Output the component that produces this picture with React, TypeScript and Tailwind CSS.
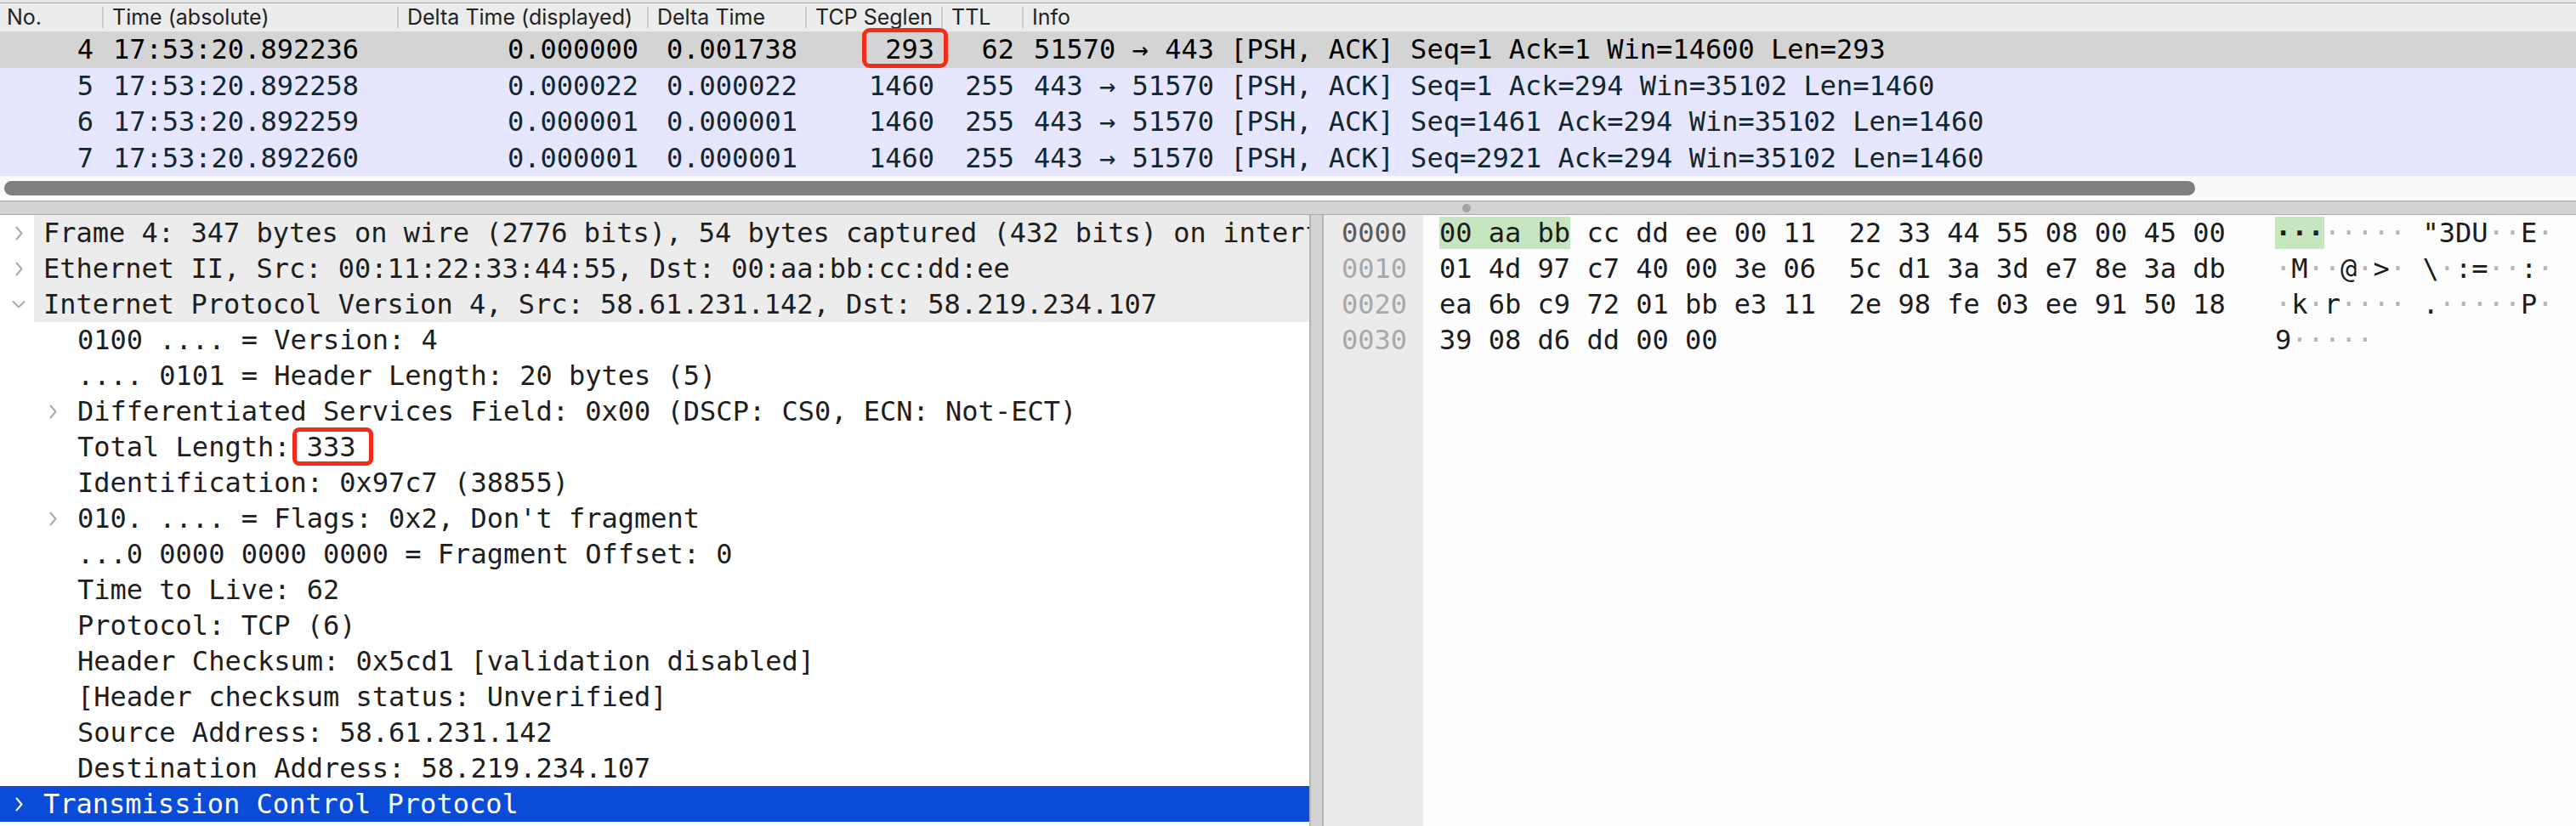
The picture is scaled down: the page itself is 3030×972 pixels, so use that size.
import React from "react";

const MONO = { fontFamily: '"DejaVu Sans Mono", "Liberation Mono", monospace' } as const;
const SANS = { fontFamily: 'Inter, "Liberation Sans", sans-serif' } as const;

function ChevRight({ color = "#a9a9a9" }: { color?: string }) {
  return (
    <svg width="11" height="17" viewBox="0 0 11 17" fill="none">
      <polyline points="2.5,1.5 8.5,8.5 2.5,15.5" stroke={color} strokeWidth="2" strokeLinecap="round" strokeLinejoin="round" />
    </svg>
  );
}

function ChevDown({ color = "#a9a9a9" }: { color?: string }) {
  return (
    <svg width="16" height="11" viewBox="0 0 16 11" fill="none">
      <polyline points="1.5,2 8,8.5 14.5,2" stroke={color} strokeWidth="2" strokeLinecap="round" strokeLinejoin="round" />
    </svg>
  );
}

type Pkt = { no: string; time: string; dd: string; d: string; seg: string; ttl: string; info: string; sel?: boolean };

const packets: Pkt[] = [
  { no: "4", time: "17:53:20.892236", dd: "0.000000", d: "0.001738", seg: "293", ttl: "62", info: "51570 → 443 [PSH, ACK] Seq=1 Ack=1 Win=14600 Len=293", sel: true },
  { no: "5", time: "17:53:20.892258", dd: "0.000022", d: "0.000022", seg: "1460", ttl: "255", info: "443 → 51570 [PSH, ACK] Seq=1 Ack=294 Win=35102 Len=1460" },
  { no: "6", time: "17:53:20.892259", dd: "0.000001", d: "0.000001", seg: "1460", ttl: "255", info: "443 → 51570 [PSH, ACK] Seq=1461 Ack=294 Win=35102 Len=1460" },
  { no: "7", time: "17:53:20.892260", dd: "0.000001", d: "0.000001", seg: "1460", ttl: "255", info: "443 → 51570 [PSH, ACK] Seq=2921 Ack=294 Win=35102 Len=1460" },
];

function HeaderCell({ label, w, first }: { label: string; w?: string; first?: boolean }) {
  return (
    <div className={`flex h-full shrink-0 ${w ?? "flex-1"}`}>
      {!first && <div className="my-[4px] w-[2px] bg-[#cbcbcb]" />}
      <div className={`flex items-center ${first ? "pl-[8px]" : "pl-[10px]"} text-[25px] text-[#222222]`} style={SANS}>
        {label}
      </div>
    </div>
  );
}

type Det = { level: 0 | 1; chev?: "r" | "d"; text: React.ReactNode; grey?: boolean; sel?: boolean };

const details: Det[] = [
  { level: 0, chev: "r", grey: true, text: "Frame 4: 347 bytes on wire (2776 bits), 54 bytes captured (432 bits) on interface en0, id 0" },
  { level: 0, chev: "r", grey: true, text: "Ethernet II, Src: 00:11:22:33:44:55, Dst: 00:aa:bb:cc:dd:ee" },
  { level: 0, chev: "d", grey: true, text: "Internet Protocol Version 4, Src: 58.61.231.142, Dst: 58.219.234.107" },
  { level: 1, text: "0100 .... = Version: 4" },
  { level: 1, text: ".... 0101 = Header Length: 20 bytes (5)" },
  { level: 1, chev: "r", text: "Differentiated Services Field: 0x00 (DSCP: CS0, ECN: Not-ECT)" },
  {
    level: 1,
    text: (
      <>
        Total Length:{" "}
        <span className="relative inline-block">
          333
          <span className="absolute -left-[17px] -right-[20px] -top-[2px] -bottom-[1px] rounded-[8px] border-[5px] border-[#f42b16]" />
        </span>
      </>
    ),
  },
  { level: 1, text: "Identification: 0x97c7 (38855)" },
  { level: 1, chev: "r", text: "010. .... = Flags: 0x2, Don't fragment" },
  { level: 1, text: "...0 0000 0000 0000 = Fragment Offset: 0" },
  { level: 1, text: "Time to Live: 62" },
  { level: 1, text: "Protocol: TCP (6)" },
  { level: 1, text: "Header Checksum: 0x5cd1 [validation disabled]" },
  { level: 1, text: "[Header checksum status: Unverified]" },
  { level: 1, text: "Source Address: 58.61.231.142" },
  { level: 1, text: "Destination Address: 58.219.234.107" },
  { level: 0, chev: "r", sel: true, text: "Transmission Control Protocol" },
];

const hexRows: { off: string; hl: string; hex: string; ascii: string; asciiHl: number }[] = [
  { off: "0000", hl: "00 aa bb", hex: " cc dd ee 00 11  22 33 44 55 08 00 45 00", ascii: "········ \"3DU··E·", asciiHl: 3 },
  { off: "0010", hl: "", hex: "01 4d 97 c7 40 00 3e 06  5c d1 3a 3d e7 8e 3a db", ascii: "·M··@·>· \\·:=··:·", asciiHl: 0 },
  { off: "0020", hl: "", hex: "ea 6b c9 72 01 bb e3 11  2e 98 fe 03 ee 91 50 18", ascii: "·k·r···· .·····P·", asciiHl: 0 },
  { off: "0030", hl: "", hex: "39 08 d6 dd 00 00", ascii: "9·····", asciiHl: 0 },
];

function Ascii({ s, hl }: { s: string; hl: number }) {
  const head = Array.from(s).slice(0, hl).join("");
  const rest = Array.from(s).slice(hl);
  return (
    <span className="whitespace-pre">
      {head && <span className="bg-[#c6e6bf] font-bold text-[#1c1c1c]">{head}</span>}
      {rest.map((c, i) => (
        <span key={i} className={c === "·" ? "text-[#b4b4b4]" : "text-[#1c1c1c]"}>
          {c}
        </span>
      ))}
    </span>
  );
}

export default function App() {
  return (
    <div className="flex h-[972px] w-[3030px] flex-col overflow-hidden bg-white">
      {/* top strip */}
      <div className="h-[4px] shrink-0 border-b border-[#ababab] bg-[#e4e4e4]" />
      {/* header */}
      <div className="flex h-[33px] shrink-0 bg-[#ececec]">
        <HeaderCell label="No." w="w-[120px]" first />
        <HeaderCell label="Time (absolute)" w="w-[347px]" />
        <HeaderCell label="Delta Time (displayed)" w="w-[294px]" />
        <HeaderCell label="Delta Time" w="w-[186px]" />
        <HeaderCell label="TCP Seglen" w="w-[160px]" />
        <HeaderCell label="TTL" w="w-[95px]" />
        <HeaderCell label="Info" />
      </div>
      {/* packet rows */}
      <div className="shrink-0 text-[32px]" style={MONO}>
        {packets.map((p) => (
          <div
            key={p.no}
            className={`flex h-[42.5px] items-center whitespace-pre leading-[42px] ${
              p.sel ? "bg-[#d4d4d4] text-black" : "bg-[#e7e6ff] text-[#12272e]"
            }`}
          >
            <div className="w-[120px] shrink-0 pr-[10px] text-right">{p.no}</div>
            <div className="w-[347px] shrink-0 pl-[13px]">{p.time}</div>
            <div className="w-[294px] shrink-0 pr-[10px] text-right">{p.dd}</div>
            <div className="w-[186px] shrink-0 pr-[9px] text-right">{p.d}</div>
            <div className="relative w-[160px] shrink-0 pr-[8px] text-right">
              {p.seg}
              {p.sel && (
                <span className="absolute -bottom-[1px] -right-[8px] -top-[4px] left-[67px] rounded-[9px] border-[5px] border-[#f42b16]" />
              )}
            </div>
            <div className="w-[95px] shrink-0 pr-[9px] text-right">{p.ttl}</div>
            <div className="flex-1 pl-[14px]">{p.info}</div>
          </div>
        ))}
      </div>
      {/* horizontal scrollbar */}
      <div className="h-[29px] shrink-0 bg-[#fafafa] pt-[6px]">
        <div className="ml-[5px] h-[17px] w-[2577px] rounded-full bg-[#7f7f7f]" />
      </div>
      {/* splitter */}
      <div className="flex h-[17px] shrink-0 items-center border-y border-[#a9a9a9] bg-[#d3d3d3]">
        <div className="ml-[1720px] h-[10px] w-[10px] rounded-full bg-[#a3a3a3]" />
      </div>
      {/* bottom panes */}
      <div className="flex min-h-0 flex-1 text-[32px]" style={MONO}>
        {/* detail tree */}
        <div className="w-[1540px] shrink-0 overflow-hidden bg-white">
          {details.map((d, i) => (
            <div
              key={i}
              className={`flex h-[42px] items-center whitespace-pre leading-[42px] ${
                d.sel ? "bg-[#0a4cd8] text-white" : "text-[#1e1e1e]"
              }`}
            >
              <div className="flex h-full w-[40px] shrink-0 items-center">
                {d.level === 0 && d.chev === "r" && (
                  <div className="ml-[17px] flex items-center">
                    <ChevRight color={d.sel ? "#ffffff" : "#a9a9a9"} />
                  </div>
                )}
                {d.level === 0 && d.chev === "d" && (
                  <div className="ml-[14px] flex items-center">
                    <ChevDown />
                  </div>
                )}
              </div>
              <div className={`flex h-full flex-1 items-center ${d.grey ? "bg-[#ececec]" : ""}`}>
                {d.level === 0 ? (
                  <div className="pl-[11px]">{d.text}</div>
                ) : (
                  <>
                    <div className="flex w-[51px] shrink-0 items-center pl-[17px]">
                      {d.chev === "r" && <ChevRight />}
                    </div>
                    <div>{d.text}</div>
                  </>
                )}
              </div>
            </div>
          ))}
        </div>
        {/* vertical splitter */}
        <div className="w-[17px] shrink-0 border-x-2 border-[#b4b4b4] bg-[#d3d3d3]" />
        {/* offsets */}
        <div className="w-[117px] shrink-0 bg-[#ebebeb]">
          {hexRows.map((r, i) => (
            <div key={r.off} className={`h-[42px] pl-[21px] leading-[42px] ${i === 0 ? "text-[#5a5a5a]" : "text-[#a8a8a8]"}`}>
              {r.off}
            </div>
          ))}
        </div>
        {/* hex + ascii */}
        <div className="flex-1 bg-[#fdfdfd] pl-[19px] text-[#1c1c1c]">
          {hexRows.map((r) => (
            <div key={r.off} className="flex h-[42px] whitespace-pre leading-[42px]">
              <span className="w-[983px] shrink-0">
                {r.hl && <span className="bg-[#c6e6bf]">{r.hl}</span>}
                {r.hex}
              </span>
              <Ascii s={r.ascii} hl={r.asciiHl} />
            </div>
          ))}
        </div>
      </div>
    </div>
  );
}
